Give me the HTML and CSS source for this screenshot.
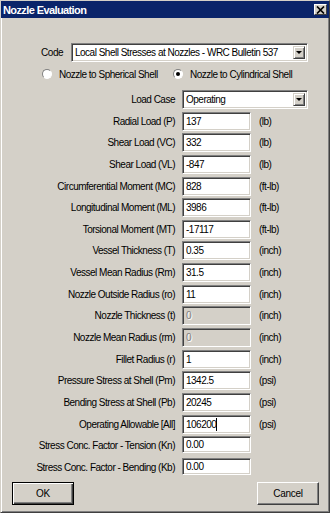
FILE: index.html
```html
<!doctype html>
<html>
	<head>
		<title>Nozzle Evaluation</title>
		<link rel="stylesheet" href="styles.css">
	</head>

	<body>
		<div class="window">
			<div class="titlebar">
				<span class="title">Nozzle Evaluation</span>
				<span class="close">
					<svg width="9" height="8" viewBox="0 0 9 8">
						<path d="M1 0.5 L8 7.5 M8 0.5 L1 7.5" stroke="#000" stroke-width="1.7" />
					</svg>
				</span>
			</div>

			<div class="content">
				<div class="code-row">
					<label>Code</label>
					<div class="combo code-combo">
						<span>Local Shell Stresses at Nozzles - WRC Bulletin 537</span>
						<span class="drop"><i></i></span>
					</div>
				</div>

				<div class="radio-row">
					<label class="radio first"><span class="circle"></span>Nozzle to Spherical Shell</label>
					<label class="radio"><span class="circle checked"></span>Nozzle to Cylindrical Shell</label>
				</div>

				<div class="fields">
					<label>Load Case</label>
					<div class="combo case-combo">
						<span>Operating</span>
						<span class="drop"><i></i></span>
					</div>

					<label>Radial Load (P)</label>
					<div class="box">137</div>
					<span class="unit">(lb)</span>

					<label>Shear Load (VC)</label>
					<div class="box">332</div>
					<span class="unit">(lb)</span>

					<label>Shear Load (VL)</label>
					<div class="box">-847</div>
					<span class="unit">(lb)</span>

					<label>Circumferential Moment (MC)</label>
					<div class="box">828</div>
					<span class="unit">(ft-lb)</span>

					<label>Longitudinal Moment (ML)</label>
					<div class="box">3986</div>
					<span class="unit">(ft-lb)</span>

					<label>Torsional Moment (MT)</label>
					<div class="box">-17117</div>
					<span class="unit">(ft-lb)</span>

					<label>Vessel Thickness (T)</label>
					<div class="box">0.35</div>
					<span class="unit">(inch)</span>

					<label>Vessel Mean Radius (Rm)</label>
					<div class="box">31.5</div>
					<span class="unit">(inch)</span>

					<label>Nozzle Outside Radius (ro)</label>
					<div class="box">11</div>
					<span class="unit">(inch)</span>

					<label>Nozzle Thickness (t)</label>
					<div class="box disabled">0</div>
					<span class="unit">(inch)</span>

					<label>Nozzle Mean Radius (rm)</label>
					<div class="box disabled">0</div>
					<span class="unit">(inch)</span>

					<label>Fillet Radius (r)</label>
					<div class="box">1</div>
					<span class="unit">(inch)</span>

					<label>Pressure Stress at Shell (Pm)</label>
					<div class="box">1342.5</div>
					<span class="unit">(psi)</span>

					<label>Bending Stress at Shell (Pb)</label>
					<div class="box">20245</div>
					<span class="unit">(psi)</span>

					<label>Operating Allowable [All]</label>
					<div class="box">106200<span class="caret"></span></div>
					<span class="unit">(psi)</span>

					<label>Stress Conc. Factor - Tension (Kn)</label>
					<div class="box short">0.00</div>
					<span class="unit"></span>

					<label>Stress Conc. Factor - Bending (Kb)</label>
					<div class="box short">0.00</div>
					<span class="unit"></span>
				</div>

				<div class="buttons">
					<button class="default">OK</button>
					<button>Cancel</button>
				</div>
			</div>
		</div>
	</body>
</html>
```

FILE: styles.css
```css
:root {
	--face: #d4d0c8;
	--shadow: #808080;
	--dark: #404040;
	--light: #ffffff;
	--title: #0a246a;
}

body {
	margin: 0;
	font-family: "Liberation Sans", Arial, sans-serif;
	font-size: 10px;
	letter-spacing: -0.5px;
	color: #000;
}

.window {
	width: 330px;
	height: 513px;
	box-sizing: border-box;
	background-color: var(--face);
	border: 1px solid;
	border-color: var(--face) var(--dark) var(--dark) var(--face);
	box-shadow:
		inset 1px 1px 0 var(--light),
		inset -1px -1px 0 var(--shadow);
}

.titlebar {
	height: 17px;
	background-color: var(--title);
	display: flex;
	align-items: center;
	justify-content: space-between;
	padding: 0 2px 0 2px;
}

.title {
	color: #fff;
	font-weight: bold;
	font-size: 11px;
	letter-spacing: -0.6px;
}

.close {
	width: 13px;
	height: 11px;
	box-sizing: border-box;
	background-color: var(--face);
	border: 1px solid;
	border-color: var(--light) var(--dark) var(--dark) var(--light);
	display: flex;
	align-items: center;
	justify-content: center;
}

.close svg {
	display: block;
}

.content {
	padding-top: 25px;
}

/* sunken field look */
.box,
.combo {
	box-sizing: border-box;
	height: 19px;
	background-color: #fff;
	border: 1px solid;
	border-color: var(--shadow) var(--light) var(--light) var(--shadow);
	box-shadow:
		inset 1px 1px 0 var(--dark),
		inset -1px -1px 0 var(--face);
	display: flex;
	align-items: center;
	padding-left: 3px;
	white-space: nowrap;
	overflow: hidden;
}

.combo {
	justify-content: space-between;
	padding-right: 2px;
}

.drop {
	width: 12px;
	height: 13px;
	box-sizing: border-box;
	background-color: var(--face);
	border: 1px solid;
	border-color: var(--face) var(--dark) var(--dark) var(--face);
	box-shadow:
		inset 1px 1px 0 var(--light),
		inset -1px -1px 0 var(--shadow);
	display: flex;
	align-items: center;
	justify-content: center;
	flex-shrink: 0;
}

.drop i {
	width: 0;
	height: 0;
	border-left: 3px solid transparent;
	border-right: 3px solid transparent;
	border-top: 3px solid #000;
}

.code-row {
	display: flex;
	align-items: center;
	gap: 8px;
}

.code-row label {
	width: 62px;
	text-align: right;
}

.code-combo {
	width: 237px;
}

.radio-row {
	display: flex;
	align-items: center;
	height: 14px;
	margin-top: 5px;
	padding-left: 41px;
	white-space: nowrap;
}

.radio {
	display: flex;
	align-items: center;
	gap: 7px;
}

.radio.first {
	width: 131px;
}

.circle {
	width: 10px;
	height: 10px;
	box-sizing: border-box;
	border-radius: 50%;
	background-color: #fff;
	border: 1px solid;
	border-color: var(--shadow) var(--light) var(--light) var(--shadow);
	display: flex;
	align-items: center;
	justify-content: center;
	flex-shrink: 0;
}

.circle.checked::after {
	content: "";
	width: 4px;
	height: 4px;
	border-radius: 50%;
	background-color: #000;
}

.fields {
	display: grid;
	grid-template-columns: 176px 69px 57px;
	grid-auto-rows: 19px;
	column-gap: 5px;
	row-gap: 2.65px;
	margin-top: 9px;
}

.fields label {
	text-align: right;
	padding-right: 2px;
	align-self: center;
	white-space: nowrap;
}

.case-combo {
	grid-column: 2 / 4;
	width: 126px;
}

.unit {
	align-self: center;
	padding-left: 3px;
}

.box.short {
	height: 17px;
}

.box.disabled {
	background-color: var(--face);
	color: var(--shadow);
	text-shadow: 1px 1px 0 var(--light);
}

.caret {
	width: 1px;
	height: 13px;
	background-color: #000;
}

.buttons {
	display: flex;
	justify-content: space-between;
	padding: 0 10px 0 11px;
	margin-top: 5px;
}

button {
	width: 62px;
	height: 23px;
	box-sizing: border-box;
	font-family: inherit;
	font-size: 10px;
	letter-spacing: -0.3px;
	color: #000;
	background-color: var(--face);
	border: 1px solid;
	border-color: var(--light) var(--dark) var(--dark) var(--light);
	box-shadow: inset -1px -1px 0 var(--shadow);
	padding: 0;
}

button.default {
	border: 1px solid #000;
	box-shadow:
		inset 1px 1px 0 var(--light),
		inset -1px -1px 0 var(--dark),
		inset -2px -2px 0 var(--shadow);
}
```
